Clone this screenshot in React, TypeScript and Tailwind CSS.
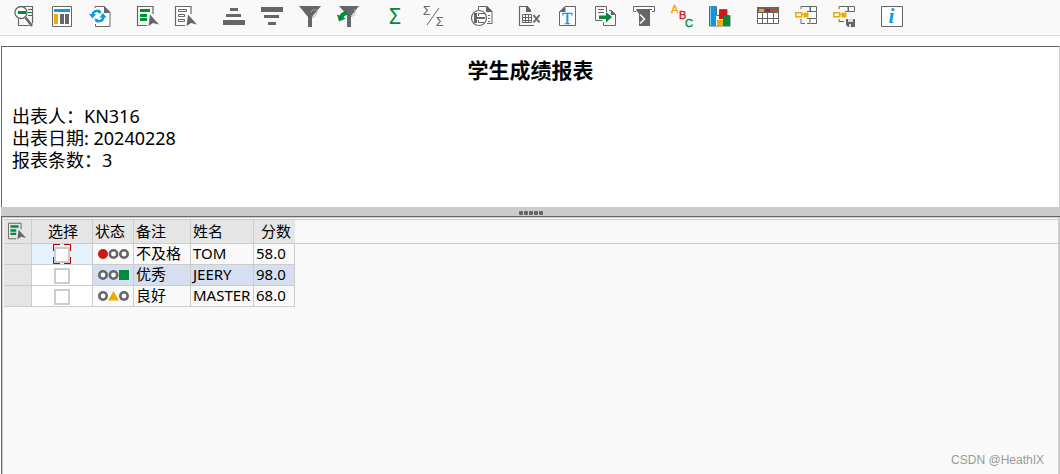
import type { ReactNode } from 'react';

const GRAY = '#666666';
const GREEN = '#008c3c';
const BLUE = '#0f9ae0';
const YELLOW = '#f0ab00';
const RED = '#cc1919';

type Tool = { label: string; icon: ReactNode };

const cursor = <path d="M13 9.500L11.500 21l4.500-3 6 1.500z" fill={GRAY} />;

const selectAllIcon = (
  <>
    <path d="M16 9V1.500H.5v19H10" fill="none" stroke={GRAY} strokeWidth={1.200} />
    <path d="M3 4h10v3H3zM3 9h7v3H3zM3 13h7v3H3z" fill={GREEN} />
    {cursor}
  </>
);

const keyTree = (
  <>
    <path d="M.75 7.750h6v4h-6z" fill="none" stroke={YELLOW} strokeWidth={1.500} />
    <path d="M7 9.500h3M9 8h4v4H9z" fill={YELLOW} stroke={YELLOW} />
    <path d="M6 4v-2.500h9v5M15.500 1.500h6v5h-6zM12 6.500h4" fill="none" stroke={GRAY} />
  </>
);

const toolGroups: Tool[][] = [
  [
    {
      label: '明细',
      icon: (
        <>
          <path d="M10 1.500h9.500v17M5.500 14v6.500h11" fill="none" stroke={GRAY} strokeWidth={1.200} />
          <path d="M15 4.500h4M15 7.500h4M15 10.500h4" stroke={GREEN} />
          <circle cx="8" cy="7.500" r="6" fill="#fff" stroke={GRAY} strokeWidth={1.300} />
          <path d="M5 6h8v3H5z" fill={GREEN} />
          <path d="M12.500 12.500l6.500 8.500" stroke={GRAY} strokeWidth={2.600} />
        </>
      ),
    },
    {
      label: '布局',
      icon: (
        <>
          <path d="M1.500 1.500h19v20h-19z" fill="#fff" stroke={GRAY} />
          <path d="M3 4h16v3H3z" fill={BLUE} />
          <path d="M3 9h4v10H3z" fill={YELLOW} />
          <path d="M9 9h4v10H9zM14 9h4v10h-4z" fill={GRAY} />
        </>
      ),
    },
    {
      label: '刷新',
      icon: (
        <>
          <path d="M6 3V1.500h9.500l5.500 6v14H6.500V19" fill="#fff" stroke={GRAY} />
          <path d="M15 1l6.500 7H15z" fill={GRAY} />
          <path d="M3.500 10c.5-4 5-5.500 8-3M14.500 12c-.5 4-5 5.500-8 3" fill="none" stroke={BLUE} strokeWidth={2.400} />
          <path d="M0 9h7l-3.500 4.500zM10.500 12.500h7L14 8z" fill={BLUE} />
          <path d="M9 4v4l4 .5zM9 18v-4l-4-.5z" fill={BLUE} />
        </>
      ),
    },
  ],
  [
    { label: '全选', icon: selectAllIcon },
    {
      label: '取消全选',
      icon: (
        <>
          <path d="M16 9V1.500H.5v19H10" fill="#fff" stroke={GRAY} strokeWidth={1.200} />
          <path d="M3.500 4.500h8v2h-8zM3.500 9.500h6v2h-6zM3.500 14.500h6v2h-6z" fill="#fff" stroke={GRAY} />
          {cursor}
        </>
      ),
    },
  ],
  [
    { label: '升序', icon: <path d="M7 3h8v3H7zM3 9h15v3H3zM0 15h22v5H0z" fill={GRAY} /> },
    { label: '降序', icon: <path d="M0 2h22v5H0zM3 10h15v3H3zM7 17h8v3H7z" fill={GRAY} /> },
    {
      label: '过滤',
      icon: (
        <>
          <path d="M0 1h22l-9 11v10H9V12z" fill={GRAY} />
          <path d="M17 4c2.500 4-1 8-4 8.500M12 7.500c0-2 2-3 4-2.500" fill="none" stroke="#aaa" />
        </>
      ),
    },
    {
      label: '清除过滤',
      icon: (
        <>
          <path d="M2 1h20l-8 10v11h-4V10z" fill={GRAY} />
          <path d="M17 4c2.500 4 0 7-3 7.500" fill="none" stroke="#aaa" />
          <path d="M10.500 6v4c-2 0-3.500 1-4 2.500l2.500 1-7 3-2-7 2.500 1C4 7.500 7 6 10.500 6z" fill={GREEN} />
        </>
      ),
    },
  ],
  [
    {
      label: '总计',
      icon: (
        <text x="4" y="19" fontSize="21" fill={GREEN} fontFamily="Noto Sans">
          Σ
        </text>
      ),
    },
    {
      label: '小计',
      icon: (
        <>
          <g fontSize="13" fill={GRAY} fontFamily="Noto Sans">
            <text x="0" y="10">Σ</text>
            <text x="13" y="21">Σ</text>
          </g>
          <path d="M4 20L16 3" stroke={GRAY} />
        </>
      ),
    },
  ],
  [
    {
      label: '打印预览',
      icon: (
        <>
          <path d="M7.500 5V1.500H16l5 5v12h-5" fill="none" stroke={GRAY} />
          <path d="M15 1h1l5 5v1h-6z" fill={GRAY} />
          <path d="M17 10.500h2M17 13.500h2M17 16.500h2" stroke={GRAY} />
          <circle cx="8" cy="13" r="7.500" fill="#fff" stroke={GRAY} strokeWidth={1.200} />
          <path d="M3 8h3v10H3zM6 12h8v2H6z" fill={GRAY} />
          <path d="M7.500 11V8.500H14M7.500 15v2.500H13" fill="none" stroke={GRAY} />
        </>
      ),
    },
  ],
  [
    {
      label: '电子表格',
      icon: (
        <>
          <path d="M15 20.500H.5v-19H8l3.500 4V7" fill="none" stroke={GRAY} strokeWidth={1.200} />
          <path d="M7 1h1.500L12 5v2H7z" fill={GRAY} />
          <path d="M3.500 9.500h9v8h-9zM3.500 12.500h9M3.500 15.500h9M6.500 9.500v8M9.500 9.500v8" fill="none" stroke={GRAY} />
          <path d="M14.500 10l6 7.500M20.500 10l-6 7.500" stroke={GRAY} strokeWidth={2} />
        </>
      ),
    },
    {
      label: '字处理',
      icon: (
        <>
          <path d="M8 1.500h10.500v19h-16V7z" fill="#fff" stroke={GRAY} />
          <path d="M8.500 1v6H2z" fill={GRAY} />
          <text x="5" y="18.500" fontSize="17" fill={BLUE} stroke={BLUE} strokeWidth={0.300} fontFamily="Liberation Serif">
            T
          </text>
        </>
      ),
    },
    {
      label: '本地文件',
      icon: (
        <>
          <path d="M11.500 7V1.500H.5v14h7" fill="none" stroke={GRAY} />
          <path d="M3 4.500h6M3 7.500h6" stroke={GRAY} />
          <path d="M8.500 17v3.500h12v-11l-4-4H14" fill="none" stroke={GRAY} />
          <path d="M16 5l5 5h-5z" fill={GRAY} />
          <path d="M4 10.500h7V7l6 5-6 5.500V14H4z" fill={GREEN} />
        </>
      ),
    },
    {
      label: '邮件收件人',
      icon: (
        <>
          <path d="M3 6.500H.5v-5h21v5H19M3 4.500h16" fill="#fff" stroke={GRAY} />
          <path d="M3 5h14v16H6V9z" fill={GRAY} />
          <path d="M7 9.500l4.500 4.500L7 18.500" fill="none" stroke="#fff" strokeWidth={1.500} />
        </>
      ),
    },
    {
      label: 'ABC 分析',
      icon: (
        <g fontSize="11" fontFamily="Liberation Sans" strokeWidth={0.400}>
          <text x="0" y="8" fill={YELLOW} stroke={YELLOW}>A</text>
          <text x="8" y="14" fill={RED} stroke={RED}>B</text>
          <text x="14" y="22" fill={GREEN} stroke={GREEN}>C</text>
        </g>
      ),
    },
    {
      label: '图形',
      icon: (
        <>
          <path d="M.5 1.500h7v9h3v-6h7.500v6h3v10.500H.5z" fill="#fff" stroke={GRAY} />
          <path d="M1.500 1H7v20H1.500z" fill={BLUE} />
          <path d="M10 5h8v9h-8z" fill={RED} />
          <path d="M8 15h6v6H8z" fill={YELLOW} />
          <path d="M14 11h7v10h-7z" fill={GREEN} />
        </>
      ),
    },
  ],
  [
    {
      label: '更改布局',
      icon: (
        <>
          <path d="M.5 2.500h21v16H.5z" fill="#fff" stroke={GRAY} />
          <path d="M0 2h22v6H0z" fill={GRAY} />
          <path d="M2 4h5v3H2z" fill={YELLOW} />
          <path d="M8 4h5v3H8z" fill={RED} />
          <path d="M15 4h5v3h-5z" fill="#d64a00" />
          <path d="M5.500 8v10M10.500 8v10M16.500 8v10M0 13.500h22" stroke={GRAY} />
        </>
      ),
    },
    {
      label: '选择布局',
      icon: (
        <>
          {keyTree}
          <path d="M6 14v4.500h4M12 18.500h3v-5h6.500v5h-6M12 13.500h4M21.500 7v6" fill="none" stroke={GRAY} />
        </>
      ),
    },
    {
      label: '保存布局',
      icon: (
        <>
          {keyTree}
          <path d="M6 14v2.500h5" fill="none" stroke={GRAY} />
          <path d="M13 14h9v8h-7l-2-2z" fill={GRAY} />
          <path d="M15 14h5v3h-5zM16 19h2v3h-2z" fill="#ddd" />
        </>
      ),
    },
  ],
  [
    {
      label: '信息',
      icon: (
        <>
          <path d="M.5 1.500h21v20H.5z" fill="#fff" stroke={GRAY} />
          <text x="7.500" y="18" fontSize="21" fontWeight="bold" fontStyle="italic" fill={BLUE} fontFamily="Liberation Serif">
            i
          </text>
        </>
      ),
    },
  ],
];

type Light = 'red' | 'yellow' | 'green';

const rows: { light: Light; remark: string; name: string; score: string }[] = [
  { light: 'red', remark: '不及格', name: 'TOM', score: '58.0' },
  { light: 'green', remark: '优秀', name: 'JEERY', score: '98.0' },
  { light: 'yellow', remark: '良好', name: 'MASTER', score: '68.0' },
];

function TrafficLight({ light }: { light: Light }) {
  return (
    <svg className="block w-8 h-[10px]" viewBox="0 0 32 10" role="img" aria-label={light}>
      <g fill="#fff" stroke={GRAY} strokeWidth={2.600}>
        {light !== 'red' && <circle cx="5" cy="5" r="3.700" />}
        {light !== 'yellow' && <circle cx="15.500" cy="5" r="3.700" />}
        {light !== 'green' && <circle cx="26" cy="5" r="3.700" />}
      </g>
      {light === 'red' && <circle cx="5" cy="5" r="5" fill={RED} />}
      {light === 'yellow' && <path d="M15.500 0l5.500 9.500H10z" fill={YELLOW} />}
      {light === 'green' && <path d="M21 0h10v10H21z" fill={GREEN} />}
    </svg>
  );
}

function Toolbar() {
  return (
    <div className="flex gap-[26px] h-9 pt-[5px] pl-[13px] bg-[#f9f9f9] border-b border-[#dcdcdc]">
      {toolGroups.map((group) => (
        <div key={group[0].label} className="flex gap-4">
          {group.map((tool) => (
            <button key={tool.label} type="button" title={tool.label} aria-label={tool.label} className="w-[22px] h-[22px]">
              <svg className="w-[22px] h-[22px] overflow-visible" viewBox="0 0 22 22">
                {tool.icon}
              </svg>
            </button>
          ))}
        </div>
      ))}
    </div>
  );
}

function ReportHeader() {
  return (
    <header className="h-[161px] pt-[9px] px-[10px] bg-white border-t border-l border-t-[#666] border-l-[#666] border-r border-r-[#ccc]">
      <h1 className="text-center text-[21px] leading-7 font-bold">学生成绩报表</h1>
      <div className="mt-[21px] text-lg leading-[22px]">
        <p>出表人：KN316</p>
        <p>出表日期: 20240228</p>
        <p>报表条数：3</p>
      </div>
    </header>
  );
}

function ResultGrid() {
  const th = 'h-6 p-0 pb-[2px] font-normal bg-[#e5e5e5] border-b border-[#ccc]';
  const td = 'h-[21px] p-0 border-b border-r border-[#ccc]';

  return (
    <table className="w-full table-fixed border-separate border-spacing-0 text-[15px] leading-[18px] text-left">
      <colgroup>
        <col className="w-7" />
        <col className="w-[61px]" />
        <col className="w-[41px]" />
        <col className="w-[57px]" />
        <col className="w-[63px]" />
        <col className="w-[41px]" />
        <col />
      </colgroup>
      <thead>
        <tr>
          <th className={`${th} border-r`}>
            <button type="button" aria-label="全选行" className="block ml-1">
              <svg className="block w-[18px] h-[18px]" viewBox="0 0 22 22">
                {selectAllIcon}
              </svg>
            </button>
          </th>
          <th className={`${th} border-r text-center pl-[2px]`}>选择</th>
          <th className={`${th} border-r pl-[2px]`}>状态</th>
          <th className={`${th} border-r pl-[2px]`}>备注</th>
          <th className={`${th} border-r pl-[2px]`}>姓名</th>
          <th className={`${th} text-right pr-1`}>分数</th>
          <td className="p-0 border-b border-[#ccc]" />
        </tr>
      </thead>
      <tbody>
        {rows.map((row, i) => {
          const bg = i % 2 ? 'bg-[#d5dff0]' : 'bg-[#f9f9f9]';
          return (
            <tr key={row.name}>
              <td className={`${td} bg-[#e5e5e5]`} />
              <td className={`${td} ${i === 0 ? 'bg-[#e5f2fb]' : 'bg-white'}`}>
                <div className="relative flex items-end justify-center w-[18px] h-5 mx-auto pb-px">
                  <input
                    type="checkbox"
                    aria-label={`选择 ${row.name}`}
                    className="appearance-none w-4 h-4 bg-white border-2 border-[#ccc] checked:bg-[#666]"
                  />
                  {/* Focus corners */}
                  {i === 0 && (
                    <svg className="absolute inset-0 w-[18px] h-5 pointer-events-none" viewBox="0 0 18 20">
                      <path d="M.5 7V.5H7M11 .5h6.500V7M.5 13v6.500H7M11 19.500h6.500V13" fill="none" stroke="#b00000" />
                    </svg>
                  )}
                </div>
              </td>
              <td className={`${td} ${bg} pl-[5px]`}>
                <TrafficLight light={row.light} />
              </td>
              <td className={`${td} ${bg} pl-[2px] pb-[2px]`}>{row.remark}</td>
              <td className={`${td} ${bg} pl-[2px] pb-[2px]`}>{row.name}</td>
              <td className={`${td} ${bg} pl-[2px] pb-[2px]`}>{row.score}</td>
            </tr>
          );
        })}
      </tbody>
    </table>
  );
}

export default function App() {
  return (
    <div className="flex flex-col min-h-screen bg-white text-black font-['Noto_Sans','Noto_Sans_CJK_SC',sans-serif]">
      <Toolbar />
      <main className="flex flex-col flex-1 mt-[10px] pl-px">
        <ReportHeader />

        {/* Splitter */}
        <div className="flex items-center justify-center gap-px h-[9px] pt-[3px] bg-[#ccc]">
          {[0, 1, 2, 3, 4].map((n) => (
            <span key={n} className="w-1 h-1 bg-[#666] rounded-[1px]" />
          ))}
        </div>

        <section className="relative flex flex-col flex-1 bg-[#f9f9f9] border-t border-l border-[#666]">
          <div className="flex-1 border-t border-l border-r-2 border-[#ccc] pt-px pl-px">
            <div className="border-t border-[#ccc]">
              <ResultGrid />
            </div>
          </div>
          <span className="absolute right-4 bottom-[6px] text-xs leading-4 text-[#999] font-['Liberation_Sans',sans-serif]">
            CSDN @HeathIX
          </span>
        </section>
      </main>
    </div>
  );
}
